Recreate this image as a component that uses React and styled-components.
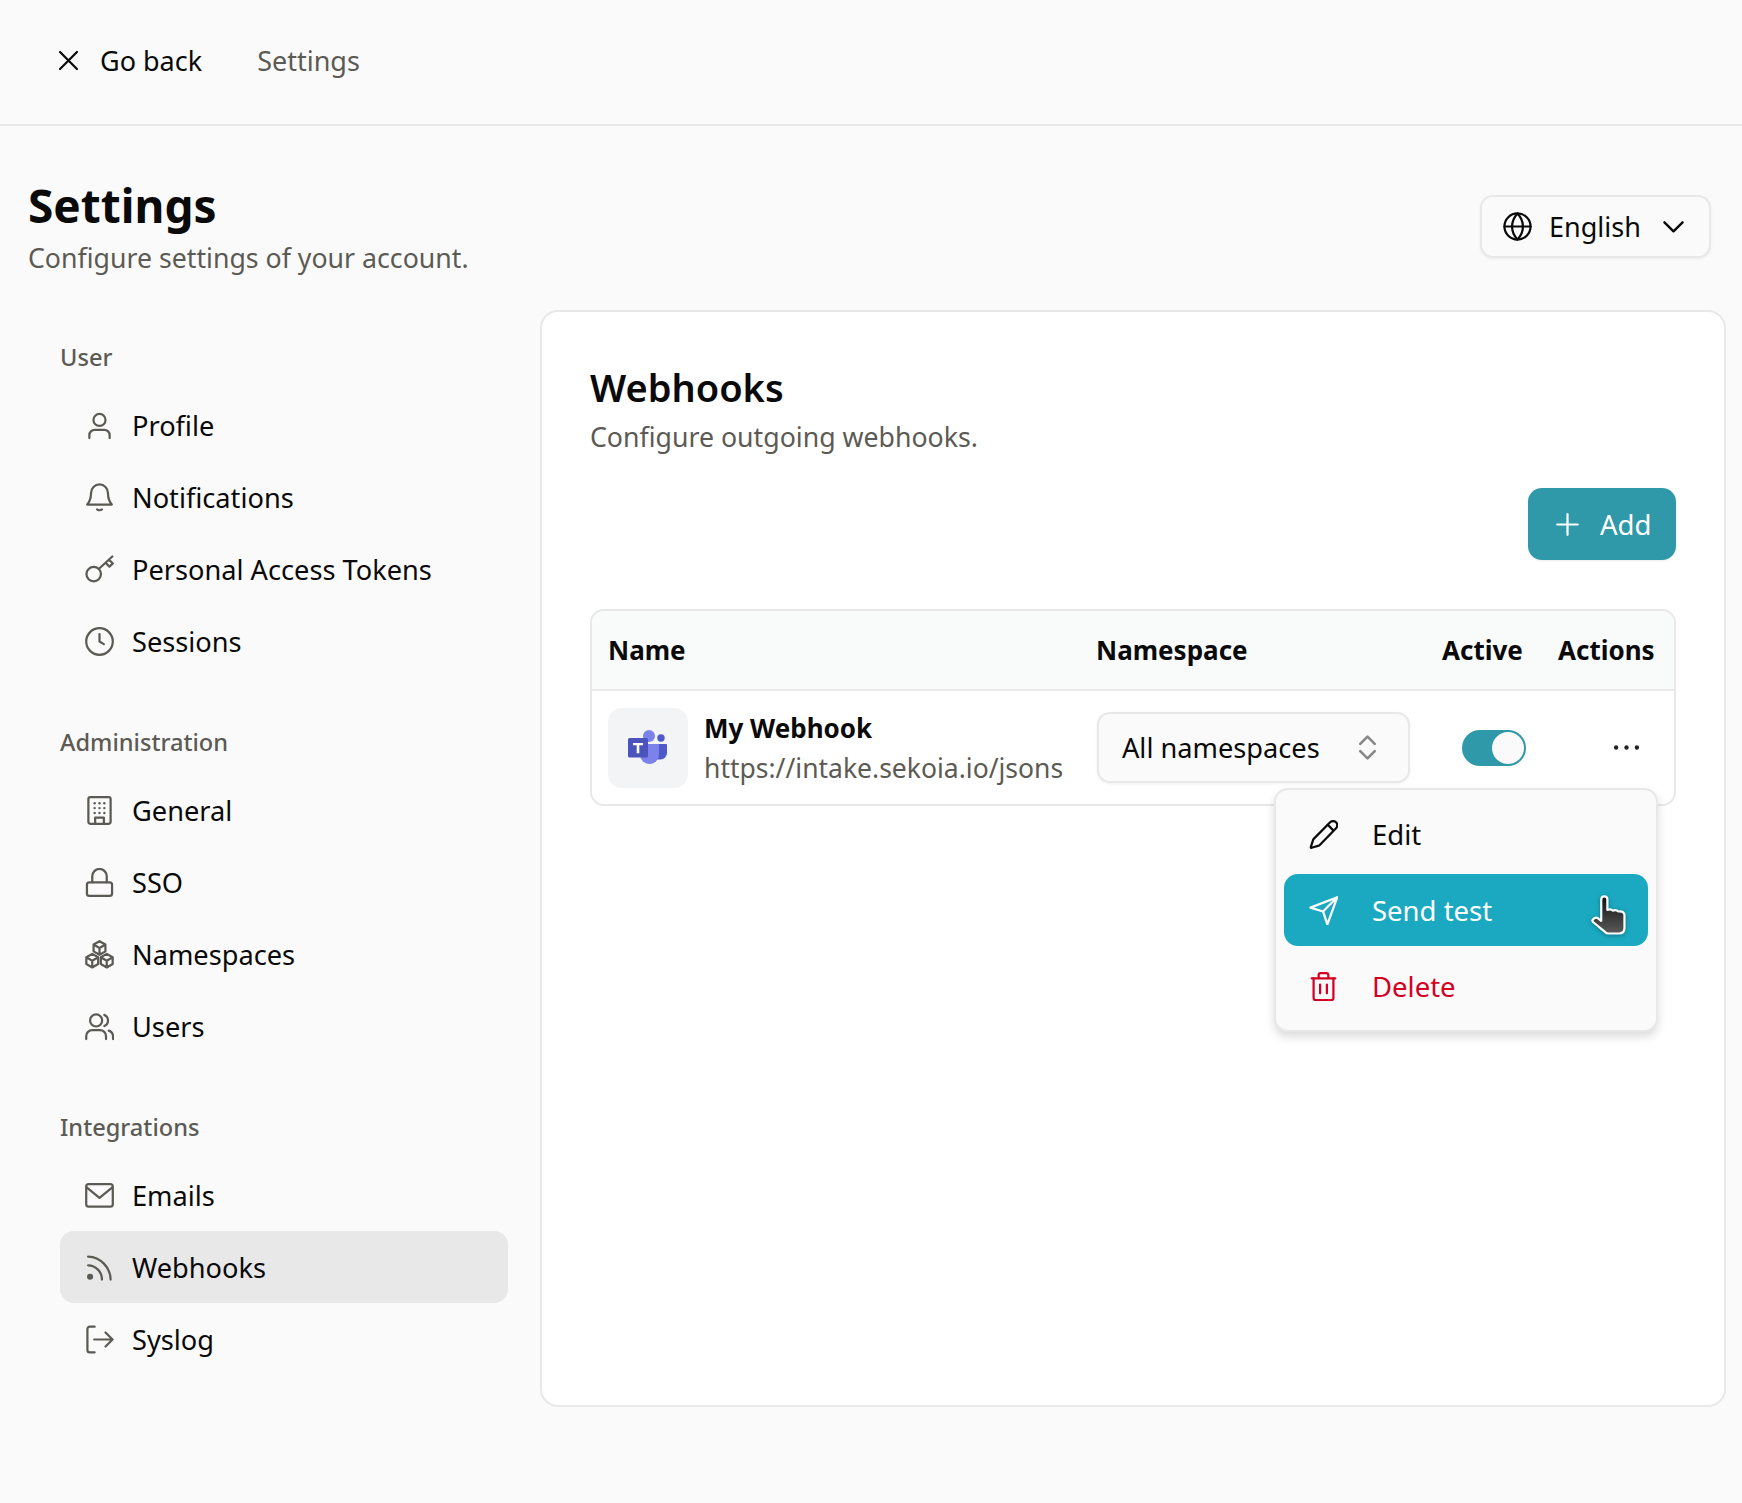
import React from "react";
import styled, { createGlobalStyle, css } from "styled-components";

const GlobalStyle = createGlobalStyle`
  * {
    box-sizing: border-box;
  }
  body {
    margin: 0;
    background: #fafafa;
    color: #0a0a0a;
    font-family: "Noto Sans", "Open Sans", sans-serif;
  }
`;

const strokeIcon = (children, size = 29, width = 1.85) => (
  <svg
    width={size}
    height={size}
    viewBox="0 0 24 24"
    fill="none"
    stroke="currentColor"
    strokeWidth={width}
    strokeLinecap="round"
    strokeLinejoin="round"
  >
    {children}
  </svg>
);

const icons = {
  close: strokeIcon(<path d="M5 5l14 14M19 5L5 19" />),
  globe: strokeIcon(
    <>
      <circle cx="12" cy="12" r="10.8" />
      <path d="M1.2 12h21.6M12 1.2c-6 6.5-6 15.1 0 21.6M12 1.2c6 6.5 6 15.1 0 21.6" />
    </>
  ),
  chevronDown: strokeIcon(<path d="M4.5 8.5L12 16l7.5-7.5" />, 29, 2),
  updown: strokeIcon(<path d="M6 9l6-6 6 6M6 15l6 6 6-6" />, 29, 2.2),
  plus: strokeIcon(<path d="M12 3.5v17M3.5 12h17" />),
  user: strokeIcon(
    <>
      <circle cx="12" cy="7.4" r="5" />
      <path d="M3.6 22.4V20a4.4 4.4 0 0 1 4.4-4.4h8a4.4 4.4 0 0 1 4.4 4.4v2.4" />
    </>
  ),
  bell: strokeIcon(
    <>
      <path d="M12 1.2a7 7 0 0 0-7 7c0 5-1.2 7.2-3.2 9.6h20.4c-2-2.4-3.2-4.6-3.2-9.6a7 7 0 0 0-7-7z" />
      <path d="M10 21.8c.7 1 3.3 1 4 0" />
    </>
  ),
  key: strokeIcon(
    <>
      <circle cx="7.2" cy="15.8" r="6" />
      <path d="M11.6 11.4L22.6 1.2M17 6.4l3.2 3.2 2.8-2.6-3.2-3.2" />
    </>
  ),
  clock: strokeIcon(
    <>
      <circle cx="12" cy="12" r="11" />
      <path d="M12 5.8V12l3.6 2.2" />
    </>
  ),
  building: strokeIcon(
    <>
      <rect x="2.8" y="1" width="18.4" height="22" rx="1.6" />
      <path d="M8.4 23v-5.2h7.2V23" />
      <g fill="currentColor" stroke="none">
        <circle cx="8" cy="6" r="1" />
        <circle cx="12" cy="6" r="1" />
        <circle cx="16" cy="6" r="1" />
        <circle cx="8" cy="10" r="1" />
        <circle cx="12" cy="10" r="1" />
        <circle cx="16" cy="10" r="1" />
        <circle cx="8" cy="14" r="1" />
        <circle cx="12" cy="14" r="1" />
        <circle cx="16" cy="14" r="1" />
      </g>
    </>
  ),
  lock: strokeIcon(
    <>
      <rect x="1.6" y="11.8" width="20.8" height="11.2" rx="2" />
      <path d="M6 11.8V6.8a6 6 0 0 1 12 0v5" />
    </>
  ),
  cubes: strokeIcon(
    <>
      <path d="M12 1l4.9 2.8v5.6L12 12.2 7.1 9.4V3.8zM7.1 3.8L12 6.6l4.9-2.8M12 6.6v5.6" />
      <path d="M6 11.5l4.9 2.8v5.6L6 22.7l-4.9-2.8v-5.6zM1.1 14.3L6 17.1l4.9-2.8M6 17.1v5.6" />
      <path d="M18 11.5l4.9 2.8v5.6L18 22.7l-4.9-2.8v-5.6zM13.1 14.3l4.9 2.8 4.9-2.8M18 17.1v5.6" />
    </>
  ),
  users: strokeIcon(
    <>
      <circle cx="9.2" cy="7" r="5" />
      <path d="M1 22.4V20a5 5 0 0 1 5-5h6.4a5 5 0 0 1 5 5v2.4" />
      <path d="M16 2.4a5 5 0 0 1 0 9.2M19.6 15.4a5 5 0 0 1 3.6 4.6v2.4" />
    </>
  ),
  mail: strokeIcon(
    <>
      <rect x="1" y="2.6" width="22" height="18.6" rx="2" />
      <path d="M1.6 5.4L12 14l10.4-8.6" />
    </>
  ),
  rss: strokeIcon(
    <>
      <circle cx="4.2" cy="19.6" r="1.6" fill="currentColor" />
      <path d="M2.6 10.2A11.6 11.6 0 0 1 14 22M2.6 3A19.4 19.4 0 0 1 21.2 22" />
    </>
  ),
  logout: strokeIcon(
    <>
      <path d="M8 1.4H4a2 2 0 0 0-2 2v17.2a2 2 0 0 0 2 2h4" />
      <path d="M7.6 12h15M17 6.2l5.8 5.8-5.8 5.8" />
    </>
  ),
  dots: strokeIcon(
    <g fill="currentColor" stroke="none">
      <circle cx="3.4" cy="12" r="1.8" />
      <circle cx="12" cy="12" r="1.8" />
      <circle cx="20.6" cy="12" r="1.8" />
    </g>
  ),
  pencil: strokeIcon(
    <>
      <path d="M22.4 6.8a3.4 3.4 0 0 0-4.9-4.9L3.9 15.6a2 2 0 0 0-.5.8l-1.9 6a.5.5 0 0 0 .6.6l6-1.8a2 2 0 0 0 .8-.5z" />
      <path d="M15.5 4l4.6 4.6" />
    </>
  ),
  send: strokeIcon(<path d="M23.4 1L1.2 9.6l10.4 3.2 3.6 10.6zM23.4 1L11.6 12.8" />),
  trash: strokeIcon(
    <>
      <path d="M2.2 5.2h19.6M8 5.2V2.6A1.6 1.6 0 0 1 9.6 1h4.8A1.6 1.6 0 0 1 16 2.6v2.6" />
      <path d="M3.8 5.2v16.4a1.6 1.6 0 0 0 1.6 1.6h13.2a1.6 1.6 0 0 0 1.6-1.6V5.2M9.2 10.4v7.2M14.8 10.4v7.2" />
    </>
  ),
};

const TeamsLogo = () => (
  <svg width="40" height="40" viewBox="0 0 40 40">
    <circle cx="33" cy="10" r="3.7" fill="#5059c9" />
    <path d="M24 16h14a1 1 0 0 1 1 1v8a6.5 6.5 0 0 1-6.5 6.5H24z" fill="#5059c9" />
    <circle cx="21" cy="8" r="6" fill="#7b83eb" />
    <path d="M12 16h18a1 1 0 0 1 1 1v9.5a9.5 9.5 0 0 1-19 0z" fill="#7b83eb" />
    <rect x="0" y="10" width="20" height="19.5" rx="1.5" fill="#4b53bc" />
    <path d="M5 15h10v2.2h-3.7v8h-2.6v-8H5z" fill="#fff" />
  </svg>
);

const HandCursor = () => (
  <svg width="44" height="46" viewBox="0 0 40 42">
    <defs>
      <linearGradient id="hand" x1="0" y1="0" x2="0" y2="1">
        <stop offset="0" stopColor="#111" />
        <stop offset="1" stopColor="#5a5a5a" />
      </linearGradient>
    </defs>
    <path
      d="M12 6q0-3 2.8-3t2.8 3v9.5q3.2-1.2 5 .6q3-1.2 5 .8q4.4-1 5.6 2.6V32q0 5-5 5H19q-2.2 0-3.6-1.5L4.5 26.5q-1.2-1.4.2-2.6l1.3-1q1.4-1 2.8 0L12 25.5z"
      fill="url(#hand)"
      stroke="#fff"
      strokeWidth="2"
      strokeLinejoin="round"
    />
  </svg>
);

const TopBar = styled.header`
  height: 126px;
  display: flex;
  align-items: center;
  padding: 0 0 3px 54px;
  border-bottom: 2px solid #e8e8e8;
`;

const BackLink = styled.a`
  display: flex;
  align-items: center;
  gap: 17px;
  font-size: 27px;
  line-height: 36px;
  color: #0a0a0a;
`;

const Crumb = styled.span`
  margin-left: 55px;
  font-size: 27px;
  line-height: 36px;
  color: #5c5a55;
`;

const PageHead = styled.section`
  display: flex;
  justify-content: space-between;
  align-items: flex-start;
  padding: 54px 31px 34px 28px;
`;

const PageTitle = styled.h1`
  margin: 0 0 9px;
  font-size: 46px;
  line-height: 51px;
  font-weight: 700;
`;

const Subtitle = styled.p`
  margin: 0;
  font-size: 26.7px;
  line-height: 36px;
  color: #5c5a55;
`;

const buttonBase = css`
  display: flex;
  align-items: center;
  border-radius: 13px;
  border: 2px solid #e8e8e8;
  background: #fafafa;
  color: #0a0a0a;
  font-family: inherit;
  box-shadow: 0 1px 3px rgba(0, 0, 0, 0.06);
`;

const LanguageButton = styled.button`
  ${buttonBase}
  width: 231px;
  height: 63px;
  margin-top: 15px;
  padding: 0 21px;
  font-size: 27px;
  span {
    margin: 0 auto 0 17px;
  }
`;

const Layout = styled.main`
  display: flex;
  gap: 32px;
  padding: 0 16px 0 60px;
`;

const Sidebar = styled.nav`
  flex: 0 0 448px;
  padding-top: 30px;
  display: flex;
  flex-direction: column;
  gap: 48px;
`;

const GroupLabel = styled.div`
  font-size: 23.6px;
  font-weight: 500;
  line-height: 35px;
  margin-bottom: 14px;
  color: #5c5a55;
`;

const NavItem = styled.a`
  height: 72px;
  display: flex;
  align-items: center;
  gap: 18px;
  padding-left: 25px;
  border-radius: 14px;
  font-size: 27.2px;
  color: #0a0a0a;
  background: ${(p) => (p.$active ? "#e8e8e8" : "transparent")};
  svg {
    color: #5c5a55;
  }
`;

const Card = styled.section`
  flex: 1;
  height: 1097px;
  padding: 53px 48px 0;
  background: #fff;
  border: 2px solid #e8e8e8;
  border-radius: 18px;
`;

const CardTitle = styled.h2`
  margin: 0 0 10px;
  font-size: 38px;
  line-height: 44px;
  font-weight: 600;
`;

const Toolbar = styled.div`
  display: flex;
  justify-content: flex-end;
  margin-top: 33px;
`;

const AddButton = styled.button`
  display: flex;
  align-items: center;
  gap: 22px;
  width: 148px;
  height: 72px;
  padding: 0 0 0 29px;
  border: 0;
  border-radius: 14px;
  background: #2f98a9;
  color: #fff;
  font-family: inherit;
  font-size: 27.5px;
  box-shadow: 0 1px 3px rgba(0, 0, 0, 0.08);
  svg {
    margin-right: -4px;
    margin-left: -4px;
  }
`;

const Table = styled.div`
  position: relative;
  margin-top: 49px;
  border: 2px solid #e8e8e8;
  border-radius: 14px;
`;

const rowGrid = css`
  display: grid;
  grid-template-columns: 488px 346px 116px 1fr;
  padding: 0 16px;
  align-items: center;
`;

const TableHead = styled.div`
  ${rowGrid}
  height: 80px;
  background: #f9fafa;
  border-bottom: 2px solid #e8e8e8;
  border-radius: 12px 12px 0 0;
  font-size: 26px;
  font-weight: 700;
`;

const TableRow = styled.div`
  ${rowGrid}
  height: 113px;
`;

const NameCell = styled.div`
  display: flex;
  align-items: center;
  gap: 16px;
`;

const Avatar = styled.div`
  width: 80px;
  height: 80px;
  flex: none;
  display: flex;
  align-items: center;
  justify-content: center;
  border-radius: 14px;
  background: #f3f4f6;
`;

const HookName = styled.div`
  font-size: 26px;
  line-height: 40px;
  font-weight: 700;
`;

const HookUrl = styled.div`
  font-size: 26.5px;
  line-height: 40px;
  color: #5c5a55;
  white-space: nowrap;
`;

const NamespaceSelect = styled.button`
  ${buttonBase}
  width: 313px;
  height: 71px;
  margin-left: 1px;
  justify-content: space-between;
  padding: 0 26px 0 23px;
  font-size: 27.2px;
  svg {
    color: #888;
  }
`;

const Toggle = styled.div`
  width: 64px;
  height: 36px;
  margin-left: 20px;
  padding: 2px;
  display: flex;
  justify-content: ${(p) => (p.$on ? "flex-end" : "flex-start")};
  border-radius: 18px;
  background: #2f98a9;
  &::after {
    content: "";
    width: 32px;
    height: 32px;
    border-radius: 50%;
    background: #fafafa;
  }
`;

const DotsButton = styled.div`
  display: flex;
  margin-left: 54px;
  color: #222;
`;

const Menu = styled.ul`
  position: absolute;
  top: 177px;
  right: 16px;
  width: 384px;
  margin: 0;
  padding: 8px;
  list-style: none;
  display: flex;
  flex-direction: column;
  gap: 4px;
  background: #fafafa;
  border: 2px solid #e8e8e8;
  border-radius: 14px;
  box-shadow: 0 5px 10px rgba(0, 0, 0, 0.14);
`;

const menuColors = {
  plain: { bg: "transparent", fg: "#0a0a0a" },
  hover: { bg: "#1aa9c0", fg: "#fff" },
  danger: { bg: "transparent", fg: "#d40023" },
};

const MenuItem = styled.li`
  position: relative;
  height: 72px;
  display: flex;
  align-items: center;
  gap: 34px;
  padding-left: 25px;
  border-radius: 14px;
  font-size: 27.5px;
  background: ${(p) => menuColors[p.$kind].bg};
  color: ${(p) => menuColors[p.$kind].fg};
`;

const Pointer = styled.span`
  position: absolute;
  top: 19px;
  right: 16px;
  display: flex;
  filter: drop-shadow(0 1px 2px rgba(0, 0, 0, 0.3));
`;

const navGroups = [
  {
    label: "User",
    items: [
      ["user", "Profile"],
      ["bell", "Notifications"],
      ["key", "Personal Access Tokens"],
      ["clock", "Sessions"],
    ],
  },
  {
    label: "Administration",
    items: [
      ["building", "General"],
      ["lock", "SSO"],
      ["cubes", "Namespaces"],
      ["users", "Users"],
    ],
  },
  {
    label: "Integrations",
    items: [
      ["mail", "Emails"],
      ["rss", "Webhooks", true],
      ["logout", "Syslog"],
    ],
  },
];

export default function App() {
  return (
    <>
      <GlobalStyle />
      <TopBar>
        <BackLink>
          {icons.close}
          Go back
        </BackLink>
        <Crumb>Settings</Crumb>
      </TopBar>
      <PageHead>
        <div>
          <PageTitle>Settings</PageTitle>
          <Subtitle>Configure settings of your account.</Subtitle>
        </div>
        <LanguageButton>
          {icons.globe}
          <span>English</span>
          {icons.chevronDown}
        </LanguageButton>
      </PageHead>
      <Layout>
        <Sidebar>
          {navGroups.map((group) => (
            <div key={group.label}>
              <GroupLabel>{group.label}</GroupLabel>
              {group.items.map(([icon, label, active]) => (
                <NavItem key={label} $active={active}>
                  {icons[icon]}
                  {label}
                </NavItem>
              ))}
            </div>
          ))}
        </Sidebar>
        <Card>
          <CardTitle>Webhooks</CardTitle>
          <Subtitle>Configure outgoing webhooks.</Subtitle>
          <Toolbar>
            <AddButton>
              {icons.plus}
              Add
            </AddButton>
          </Toolbar>
          <Table>
            <TableHead>
              <span>Name</span>
              <span>Namespace</span>
              <span>Active</span>
              <span>Actions</span>
            </TableHead>
            <TableRow>
              <NameCell>
                <Avatar>
                  <TeamsLogo />
                </Avatar>
                <div>
                  <HookName>My Webhook</HookName>
                  <HookUrl>https://intake.sekoia.io/jsons</HookUrl>
                </div>
              </NameCell>
              <NamespaceSelect>
                All namespaces
                {icons.updown}
              </NamespaceSelect>
              <Toggle $on />
              <DotsButton>{icons.dots}</DotsButton>
            </TableRow>
            <Menu>
              <MenuItem $kind="plain">
                {icons.pencil}
                Edit
              </MenuItem>
              <MenuItem $kind="hover">
                {icons.send}
                Send test
                <Pointer>
                  <HandCursor />
                </Pointer>
              </MenuItem>
              <MenuItem $kind="danger">
                {icons.trash}
                Delete
              </MenuItem>
            </Menu>
          </Table>
        </Card>
      </Layout>
    </>
  );
}
